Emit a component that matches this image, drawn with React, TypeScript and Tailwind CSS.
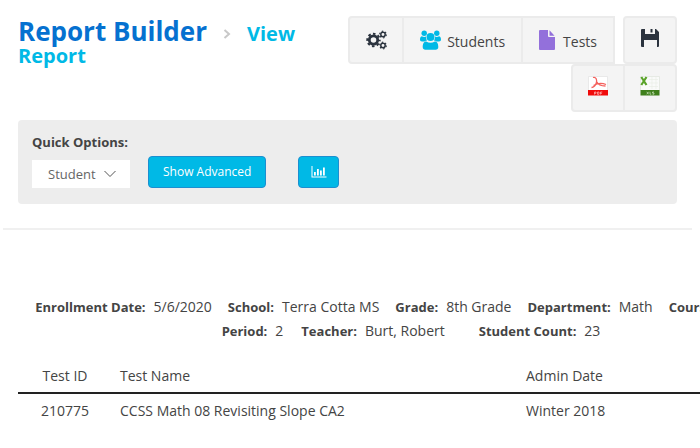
import React from 'react'
import type { ReactNode } from 'react'

const toolClass = 'h-12 border-2 border-[#ebebeb] bg-[#f4f4f4] flex items-center justify-center text-sm text-[#444]'

const CogsIcon = () => (
  <svg className="w-[21px] h-5" viewBox="0 0 21 20" fill="none" stroke="#2b333e">
    <circle cx="7.500" cy="10" r="4.200" strokeWidth="2.800" />
    <circle cx="7.500" cy="10" r="6.200" strokeWidth="2" strokeDasharray="2.600 2.269" strokeDashoffset="1.300" />
    <circle cx="17" cy="4.500" r="2.200" strokeWidth="1.500" />
    <circle cx="17" cy="4.500" r="3.300" strokeWidth="1.200" strokeDasharray="1.500 1.956" />
    <circle cx="17" cy="15.500" r="2.200" strokeWidth="1.500" />
    <circle cx="17" cy="15.500" r="3.300" strokeWidth="1.200" strokeDasharray="1.500 1.956" />
  </svg>
)

const UsersIcon = () => (
  <svg className="w-[21px] h-5" viewBox="0 0 21 20" fill="#00b9e6">
    <circle cx="4.200" cy="3.200" r="2.700" />
    <circle cx="16.800" cy="3.200" r="2.700" />
    <circle cx="10.500" cy="7" r="4" />
    <path d="M1.800 6.300c1.500 1 3.300 1 4.200.3-.2 1.700.3 3 1.200 4-1 0-1.900.3-2.600.9H2c-1.300 0-2-.7-2-1.900C0 8 .4 6.500 1.800 6.300z" />
    <path d="M19.200 6.300c-1.500 1-3.300 1-4.200.3.2 1.700-.3 3-1.200 4 1 0 1.900.3 2.600.9H19c1.300 0 2-.7 2-1.900 0-1.600-.4-3.100-1.800-3.300z" />
    <path d="M6.200 11.500c2.600 1.800 6 1.800 8.600 0 2.700 0 3.500 2.700 3.500 5.600 0 1.700-1.100 2.700-2.700 2.700H5.400c-1.600 0-2.700-1-2.700-2.700 0-2.900.8-5.600 3.500-5.600z" />
  </svg>
)

const FileIcon = () => (
  <svg className="w-4 h-5" viewBox="0 0 16 20" fill="#9370db">
    <path d="M1 0h8v6q0 1 1 1h6v12q0 1-1 1H1q-1 0-1-1V1q0-1 1-1z" />
    <path d="M10.500 0.300 15.500 5.700h-5z" />
  </svg>
)

const SaveIcon = () => (
  <svg className="w-[18px] h-[18px]" viewBox="0 0 18 18" fill="#2b333e">
    <path fillRule="evenodd" d="M1 0h3v6h10V0h1l3 3v14q0 1-1 1h-1v-7H3v7H1q-1 0-1-1V1q0-1 1-1z" />
    <path d="M4 5h10v3H4zM9.500 0h2v3.500h-2z" />
  </svg>
)

const PdfIcon = () => (
  <svg className="w-5 h-5" viewBox="0 0 20 20">
    <path d="M0.500 0.500h19v14h-19z" fill="#fff" stroke="#e4e4e4" strokeWidth="0.800" />
    <path d="M5 1.500c3-1 4 2 3.500 5C8 9 5.500 11.500 3.500 11.500M8.500 5.500c1.500 3 5 4.500 9 4.500M5.500 9.500c4-2.500 8-3 12.500-1" fill="none" stroke="#f4605c" strokeWidth="1.300" />
    <path d="M0 14h20v5.500H0z" fill="#f00a0a" />
    <path d="M6.500 18.500v-2.500h1.500v1.300H6.500M9.500 16v2.300h1.500v-2.300zM12.500 18.500v-2.500h1.800M12.500 17.300h1.500" fill="none" stroke="#fbb" strokeWidth="0.700" />
  </svg>
)

const XlsIcon = () => (
  <svg className="w-5 h-5" viewBox="0 0 20 20">
    <path d="M0.500 0.500h19v14h-19z" fill="#f9faf9" stroke="#e2e6e0" strokeWidth="0.800" />
    <path d="M9 3.500h9M9 7h9M9 10.500h9M12 1v12M16 1v12" stroke="#e9eee7" strokeWidth="0.700" />
    <path d="M1.300 1 6.500 9M6.500 1 1.300 9" stroke="#5aa32a" strokeWidth="2.200" />
    <path d="M0.500 14h19v5.500h-19z" fill="#3f7f1c" />
    <path d="M6.800 15.800l1.800 2.500M8.600 15.800l-1.800 2.500M10 15.800v2.400h1.300M14 16h-1.500v1h1.500v1.200h-1.500" fill="none" stroke="#cfe3c2" strokeWidth="0.700" />
  </svg>
)

const ChartIcon = () => (
  <svg className="w-4 h-3" viewBox="0 0 16 12" fill="#fff">
    <path d="M0.500 0h1v10.500H15.500v1H0.500zM3 6h1.800v3.500H3zM6 3h1.800v6.500H6zM9 4.500h1.800v5H9zM12 1.500h1.800v8H12z" />
  </svg>
)

const Field = ({ label, children, className = '' }: { label: string; children?: ReactNode; className?: string }) => (
  <div className={`shrink-0 whitespace-nowrap flex gap-2 items-baseline ${className}`}>
    <dt className="font-bold text-[13px] leading-6">{label}</dt>
    <dd>{children}</dd>
  </div>
)

const App = () => {
  return (
    <div className="min-h-screen overflow-hidden bg-white font-['Open_Sans',sans-serif] text-[#444]">
      <header className="flex justify-between items-start gap-2 pl-[18px] pr-[23px] pt-4">
        <h1 className="font-bold text-xl leading-5 text-[#00b9e6]">
          <span className="text-[26px] leading-[30px] text-[#0571d0]">Report Builder</span>
          <svg className="inline-block w-2 h-3 mx-4 mb-1" viewBox="0 0 8 12" fill="none" stroke="#c8c8c8" strokeWidth="2">
            <path d="M1.500 2 6 6 1.500 10" />
          </svg>
          View Report
        </h1>
        <div className="flex flex-col items-end shrink-0">
          <div className="flex">
            <button aria-label="Settings" className={`${toolClass} w-14 rounded-l`}>
              <CogsIcon />
            </button>
            <button className={`${toolClass} px-4 gap-1.5 -ml-0.5`}>
              <UsersIcon />
              <span className="pt-1">Students</span>
            </button>
            <button className={`${toolClass} px-4 gap-2 -ml-0.5`}>
              <FileIcon />
              <span className="pt-1">Tests</span>
            </button>
            <button aria-label="Save" className={`${toolClass} w-[54px] pb-1 ml-2 rounded`}>
              <SaveIcon />
            </button>
          </div>
          <div className="flex">
            <button aria-label="Export PDF" className={`${toolClass} w-[54px] pb-1 rounded-l`}>
              <PdfIcon />
            </button>
            <button aria-label="Export XLS" className={`${toolClass} w-[54px] pb-1 -ml-0.5 rounded-r`}>
              <XlsIcon />
            </button>
          </div>
        </div>
      </header>

      <section className="ml-[18px] mr-[23px] mt-2 rounded-sm bg-[#ededed] px-3.5 pt-3 pb-4">
        <label htmlFor="level" className="block font-bold text-[13px] leading-5 text-[#444]">Quick Options:</label>
        <div className="flex items-end mt-1">
          <div className="relative">
            <select id="level" className="appearance-none w-[98px] h-7 pl-4 bg-white text-[13px] leading-5 text-[#666]">
              <option>Student</option>
            </select>
            <svg className="absolute right-3.5 top-2 w-3 h-3 pointer-events-none" viewBox="0 0 12 12" fill="none" stroke="#555">
              <path d="M0.500 3l5.500 5.500 5.500-5.500" />
            </svg>
          </div>
          <button className="ml-[18px] h-8 px-3.5 rounded-sm border border-[#1c8fd0] bg-[#00b9e6] text-xs leading-5 text-white">Show Advanced</button>
          <button aria-label="Show chart" className="ml-8 h-8 w-[41px] flex items-center justify-center rounded-sm border border-[#1c8fd0] bg-[#00b9e6]">
            <ChartIcon />
          </button>
        </div>
      </section>

      <hr className="mt-6 ml-[3px] mr-2 border-t-2 border-[#f0f0f0]" />

      <main className="mt-[65px] ml-[18px] w-[786px] text-sm leading-6">
        <dl>
          <div className="flex justify-center gap-4">
            <Field label="Enrollment Date:">5/6/2020</Field>
            <Field label="School:">Terra Cotta MS</Field>
            <Field label="Grade:">8th Grade</Field>
            <Field label="Department:">Math</Field>
            <Field label="Course:" className="w-[118px]" />
          </div>
          <div className="flex justify-center gap-[18px]">
            <Field label="Period:">2</Field>
            <Field label="Teacher:">Burt, Robert</Field>
            <Field label="Student Count:" className="ml-4">23</Field>
          </div>
        </dl>
        <table className="mt-4 w-full table-fixed border-collapse">
          <thead>
            <tr className="border-b-2 border-[#222]">
              <th className="w-[94px] h-[34px] font-normal">Test ID</th>
              <th className="w-[406px] font-normal text-left pl-2">Test Name</th>
              <th className="font-normal text-left pl-2">Admin Date</th>
            </tr>
          </thead>
          <tbody>
            <tr>
              <td className="h-[34px] text-center">210775</td>
              <td className="pl-2">CCSS Math 08 Revisiting Slope CA2</td>
              <td className="pl-2">Winter 2018</td>
            </tr>
          </tbody>
        </table>
      </main>
    </div>
  )
}

export default App
